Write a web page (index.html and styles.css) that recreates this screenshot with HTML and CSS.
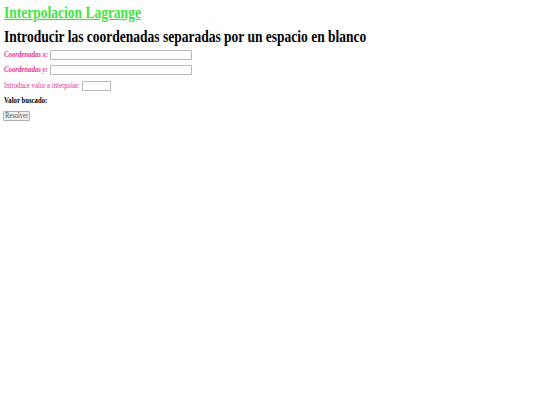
FILE: index.html
```html
<!DOCTYPE html>
<html lang="es">
<head>
<meta charset="utf-8">
<title>Interpolacion Lagrange</title>
<link rel="stylesheet" href="styles.css">
</head>
<body>
<h1 class="title"><a class="title-link" href="#">Interpolacion Lagrange</a></h1>
<h2 class="heading">Introducir las coordenadas separadas por un espacio en blanco</h2>
<form class="form">
  <div class="row"><label class="label label-strong" for="cx">Coordenadas x:</label><input class="field field-long" id="cx" type="text"></div>
  <div class="row"><label class="label label-strong" for="cy">Coordenadas y:</label><input class="field field-long" id="cy" type="text"></div>
  <div class="row"><label class="label label-plain" for="vi">Introduce valor a interpolar:</label><input class="field field-short" id="vi" type="text"></div>
  <div class="row"><span class="label result">Valor buscado:</span></div>
  <div class="row"><button class="btn" type="button"><span class="btn-text">Resolver</span></button></div>
</form>
</body>
</html>
```
FILE: styles.css
```css
html, body {
  margin: 0;
  padding: 0;
  background: #ffffff;
}
body {
  font-family: "Liberation Serif", "Times New Roman", serif;
  padding: 0 4px;
}
.title {
  margin: 5px 0 0;
  font-size: 13.5px;
  line-height: 15px;
  font-weight: bold;
  transform: scaleY(1.17);
  transform-origin: 50% 50%;
}
.title-link {
  color: #3ee63e;
  text-decoration: underline;
}
.heading {
  margin: 8.5px 0 0;
  font-size: 13.5px;
  line-height: 15px;
  font-weight: bold;
  color: #000000;
  transform: scaleY(1.17);
  transform-origin: 50% 50%;
}
.form {
  margin-top: 6.5px;
  display: flex;
  flex-direction: column;
  gap: 5.25px;
}
.row {
  display: flex;
  align-items: center;
  gap: 2px;
  height: 10px;
  font-size: 6.75px;
}
.label {
  display: inline-block;
  line-height: 8px;
  transform: scaleY(1.15);
  transform-origin: 50% 50%;
}
.label-strong {
  color: #de2f96;
  font-weight: bold;
  font-style: italic;
}
.label-plain {
  color: #de2f96;
}
.result {
  font-weight: bold;
  color: #000;
}
.field {
  box-sizing: border-box;
  height: 10px;
  margin: 0;
  padding: 0 2px;
  border: 1px solid #b8b8b8;
  border-radius: 1px;
  background: #fff;
  font-size: 6.75px;
}
.field-long { width: 142px; }
.field-short { width: 29px; }
.btn {
  box-sizing: border-box;
  display: flex;
  align-items: center;
  justify-content: center;
  height: 10px;
  width: 27px;
  margin: 0 0 0 -1px;
  padding: 0;
  border: 1px solid #b0b0b0;
  border-radius: 1px;
  background: #f0f0f0;
  color: #555;
  font-family: "Liberation Serif", "Times New Roman", serif;
  font-size: 6.5px;
  line-height: 8px;
}
.btn-text {
  display: inline-block;
  transform: scaleY(1.15);
}
```
